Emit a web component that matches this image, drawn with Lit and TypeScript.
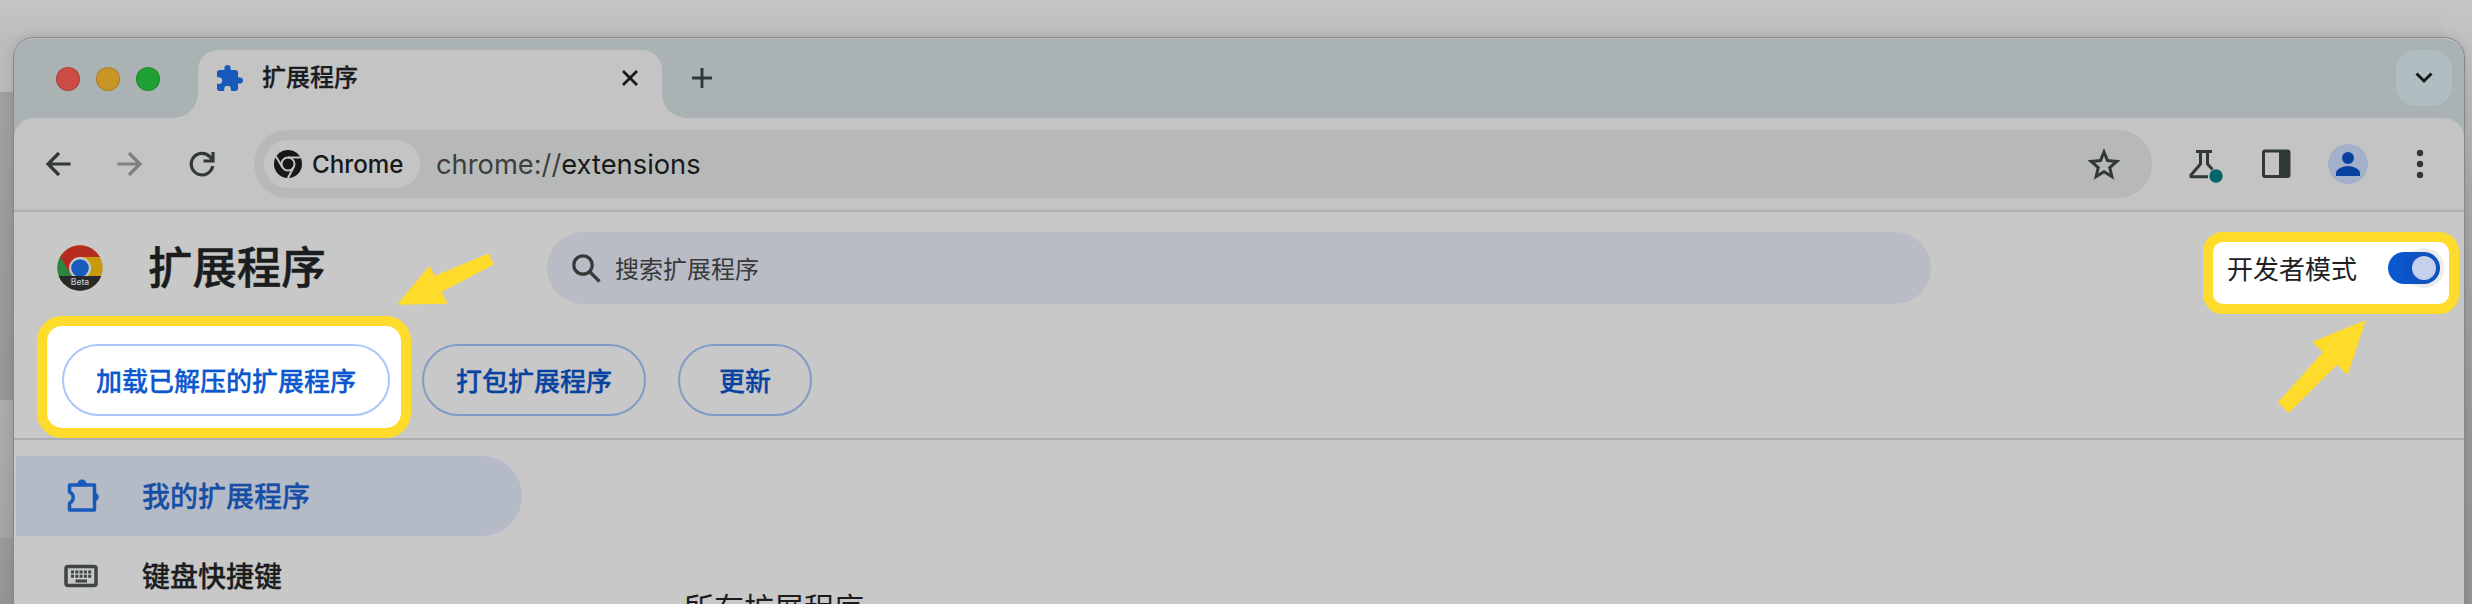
import { LitElement, html, css } from "lit";
import { customElement } from "lit/decorators.js";

@customElement("app-root")
export class AppRoot extends LitElement {
  static styles = css`
    * { box-sizing: border-box; }
    :host {
      box-sizing: border-box; display: block; width: 100%; height: 604px; overflow: hidden; position: relative;
      background:
        linear-gradient(180deg, #c5c5c5 0, #bebebe 60px, #a8a8a8 200px, #989898 420px, #949494 100%) right / 30px 100% no-repeat,
        linear-gradient(180deg, #c6c6c6 0, #bcbcbc 40px, #bababa 92px, #a0a0a0 92px, #969696 400px, #acacac 400px, #a4a4a4 538px, #9a9a9a 538px, #949494 100%) left / 30px 100% no-repeat,
        linear-gradient(180deg, #c6c6c6 0, #bcbcbc 40px);
      font-family: Inter, "Noto Sans CJK SC", sans-serif; color: #1b1c1e;
      padding: 38px 8px 0 14px;
    }
    svg { display: block; overflow: visible; flex: none; }
    .window {
      height: 566px; border-radius: 20px 20px 0 0; background: #abb2b4; position: relative;
      box-shadow: 0 0 0 1px #868788, 0 0 12px rgba(0,0,0,.16); display: flex; flex-direction: column;
    }
    .strip { height: 80px; flex: none; display: flex; align-items: center; padding: 12px 12px 12px 42px; box-shadow: inset 0 1px 0 #bcc2c3; border-radius: 20px 20px 0 0; }
    .lights { display: flex; gap: 16px; margin-top: 2px; }
    .light { width: 24px; height: 24px; border-radius: 50%; border: 1px solid rgba(0,0,0,.15); }
    .red { background: #cb4c44; } .amber { background: #ca9527; } .green { background: #1fa032; }
    .tab {
      align-self: flex-start; margin-left: 38px; width: 464px; height: 68px; background: #c4c4c4; border-radius: 20px 20px 0 0;
      position: relative; display: flex; align-items: center; padding: 0 24px 12px 19px; font-size: 24px; font-weight: 500;
    }
    .tab::before, .tab::after { content: ""; position: absolute; bottom: 0; width: 24px; height: 24px; }
    .tab::before { left: -24px; background: radial-gradient(circle at 0 0, transparent 23.5px, #c4c4c4 24px); }
    .tab::after { right: -24px; background: radial-gradient(circle at 100% 0, transparent 23.5px, #c4c4c4 24px); }
    .tabname { margin-left: 19px; flex: 1; line-height: 36px; -webkit-text-stroke: .3px; }
    .plus { margin-left: 30px; flex: 1; }
    .chev { width: 56px; height: 56px; border-radius: 20px; background: #b0bec2; display: grid; place-items: center; }
    .toolbar {
      height: 94px; flex: none; background: #c4c4c4; border-radius: 20px 20px 0 0; border-bottom: 2px solid #b0b0b0;
      display: flex; align-items: center; padding-left: 28px;
    }
    .nav { display: flex; gap: 40px; padding-right: 36px; }
    .omni {
      height: 68px; flex: 1; border-radius: 34px; background: #b7b9b8; display: flex; align-items: center; padding: 0 31px 0 10px;
    }
    .chip { width: 156px; height: 48px; border-radius: 24px; background: #c4c4c4; display: flex; align-items: center; padding-left: 10px; gap: 10px; font-size: 24.2px; font-weight: 500; color: #171919; }
    .url { margin-left: 16px; flex: 1; font-size: 27.3px; color: #171919; white-space: nowrap; }
    .url span { color: #3c3f3e; }
    .tools { margin-left: 32px; }
    .page { flex: 1; min-height: 0; overflow: hidden; background: #c8c8c8; display: flex; flex-direction: column; }
    .head { height: 112px; flex: none; display: flex; align-items: center; padding: 0 24px 0 43px; }
    h1 { margin: 0 0 0 45px; font-size: 44.4px; font-weight: 500; line-height: 60px; width: 356px; -webkit-text-stroke: .5px; }
    .logo { width: 46px; }
    .search { height: 72px; width: 1384px; margin-left: 43px; border-radius: 36px; background: #b9bcc5; display: flex; align-items: center; gap: 14px; padding-left: 25px; font-size: 24px; color: #37393a; }
    .search span { padding-bottom: 2px; }
    .dev { margin-left: auto; height: 40px; position: relative; z-index: 1; display: flex; align-items: center; gap: 31px; font-size: 26px; color: #202124; }
    .dev > span { padding-bottom: 1px; }
    .dev .spot { left: -24px; top: -16px; width: 256px; height: 82px; }
    .spot { position: absolute; z-index: -1; border: 10px solid #ffdb2b; border-radius: 20px; background: #fff; }
    .toggle { width: 52px; height: 32px; border-radius: 16px; background: #0b57d0; position: relative; }
    .toggle::before { content: ""; position: absolute; width: 40px; height: 40px; border-radius: 50%; left: 16px; top: -4px; background: rgba(31,31,31,.09); }
    .toggle::after { content: ""; position: absolute; width: 24px; height: 24px; border-radius: 50%; left: 24px; top: 4px; background: #c5d1ec; }
    .actions { height: 116px; flex: none; border-bottom: 2px solid #adadb1; display: flex; gap: 32px; padding: 20px 0 0 48px; position: relative; z-index: 0; }
    .btn { height: 72px; border: 2px solid #829bc6; border-radius: 36px; display: grid; place-items: center; padding-bottom: 2px; color: #0943a2; font-size: 26px; font-weight: 500; -webkit-text-stroke: .3px; position: relative; }
    .btn.load { width: 328px; border-color: #a8c7fa; color: #0b57d0; }
    .btn.pack { width: 224px; } .btn.upd { width: 134px; }
    .load .spot { left: -27px; top: -30px; width: 374px; height: 122px; border-radius: 25px; }
    .body { display: flex; }
    .side { width: 508px; padding: 16px 0 0 2px; }
    .item { height: 80px; display: flex; align-items: center; padding: 0 0 2px 46px; font-size: 28px; font-weight: 500; -webkit-text-stroke: .3px; }
    .item span { margin-left: 38px; }
    .on { background: #b4bac6; border-radius: 0 40px 40px 0; color: #174ea6; }
    .all { padding: 146px 0 0 162px; font-size: 30px; line-height: 44px; white-space: nowrap; }
    .arrows { position: absolute; left: 0; top: 0; }
  `;

  render() {
    return html`
      <div class="window">
        <div class="strip">
          <div class="lights"><i class="light red"></i><i class="light amber"></i><i class="light green"></i></div>
          <div class="tab">
            <svg width="26" height="26" viewBox="2 1 21 21"><path fill="#185abc" d="M20.500 11H19V7c0-1.100-.9-2-2-2h-4V3.500a2.500 2.500 0 0 0-5 0V5H4c-1.100 0-2 .9-2 2v3.800h1.500a2.700 2.700 0 0 1 0 5.400H2V20c0 1.100.9 2 2 2h3.800v-1.500a2.700 2.700 0 0 1 5.400 0V22H17c1.100 0 2-.9 2-2v-4h1.500a2.500 2.500 0 0 0 0-5z"/></svg>
            <span class="tabname">扩展程序</span>
            <svg width="16" height="16" viewBox="0 0 16 16" stroke="#171919" stroke-width="2.800"><path d="M1 1l14 14M15 1L1 15"/></svg>
          </div>
          <div class="plus"><svg width="20" height="20" viewBox="0 0 20 20" stroke="#303838" stroke-width="2.900"><path d="M10 0v20M0 10h20"/></svg></div>
          <div class="chev"><svg width="18" height="12" viewBox="0 0 18 12" fill="none" stroke="#171919" stroke-width="3"><path d="M1.500 1.500l7.500 7.500L16.500 1.500"/></svg></div>
        </div>
        <div class="toolbar">
          <div class="nav">
            <svg width="32" height="32" viewBox="0 0 32 32" fill="none" stroke="#303838" stroke-width="3.200"><path d="M28.500 16H6M17 5L6 16l11 11"/></svg>
            <svg width="32" height="32" viewBox="0 0 32 32" fill="none" stroke="#808080" stroke-width="3.200"><path d="M3.500 16H26M15 5l11 11-11 11"/></svg>
            <svg width="32" height="32" viewBox="0 0 32 32" fill="none" stroke="#303838" stroke-width="3.200"><path d="M26.700 18A10.800 10.800 0 1 1 24 8.800l2.500 2.700M27 4v9H17.500"/></svg>
          </div>
          <div class="omni">
            <div class="chip">
              <svg width="28" height="28" viewBox="0 0 28 28"><circle cx="14" cy="14" r="14" fill="#171919"/><g fill="none" stroke="#c4c4c4" stroke-width="2"><circle cx="14" cy="14" r="6.500"/><path d="M14 7.500h12.500M8.400 17.300L2 6.500M19.600 17.300L14 28"/></g></svg>
              Chrome
            </div>
            <div class="url"><span>chrome://</span>extensions</div>
            <svg width="34" height="32" viewBox="0 0 34 32" fill="none" stroke="#303838" stroke-width="3"><path d="M17 4l3.500 8.600 9.300.8-7 6.100 2.100 9.100L17 23.800l-7.900 4.800 2.100-9.100-7-6.100 9.300-.8z"/></svg>
          </div>
          <div class="tools">
            <svg width="280" height="40" viewBox="2184 144 280 40">
              <g fill="none" stroke="#303838" stroke-width="3"><path stroke-linejoin="round" d="M2196 151.500h16M2200.500 151v13l-9.500 11v1.700h17M2207.500 151v13l5 5.500"/><rect x="2263.500" y="151" width="25.500" height="25.500" rx="1.500"/></g>
              <path d="M2279 150h10v27h-10z" fill="#303838"/><circle cx="2216" cy="176" r="6.700" fill="#00666c"/>
              <circle cx="2348" cy="164" r="20" fill="#a3b0cb"/><circle cx="2348" cy="158" r="6" fill="#0842a0"/><path fill="#0842a0" d="M2336 176v-3c0-4 7-7 12-7s12 3 12 7v3z"/>
              <g fill="#303838"><circle cx="2420" cy="153" r="3.200"/><circle cx="2420" cy="164" r="3.200"/><circle cx="2420" cy="175" r="3.200"/></g>
            </svg>
          </div>
        </div>
        <div class="page">
          <div class="head">
            <svg class="logo" width="46" height="46" viewBox="0 0 46 46">
              <defs><clipPath id="disc"><circle cx="23" cy="23" r="22.700"/></clipPath></defs>
              <g clip-path="url(#disc)"><path fill="#c79a0c" d="M0 0h46v46H0z"/><path fill="#2a8442" d="M0 0l23 40H0z"/><path fill="#b52b22" d="M3 11.500L13.500 29 23 12h23V0H0z"/><circle cx="23" cy="23" r="11" fill="#c8c8c8"/><circle cx="23" cy="23" r="8.800" fill="#175bbd"/><path fill="#28292b" d="M0 31h46v15H0z"/></g>
              <text x="23" y="40" text-anchor="middle" font-size="8.500" font-weight="500" fill="#c8c8c8">Beta</text>
            </svg>
            <h1>扩展程序</h1>
            <div class="search"><svg width="29" height="29" viewBox="0 0 29 29" fill="none" stroke="#37393a" stroke-width="3.200"><circle cx="11" cy="11" r="9.200"/><path d="M17.500 17.500l10 10"/></svg><span>搜索扩展程序</span></div>
            <div class="dev"><div class="spot"></div><span>开发者模式</span><div class="toggle"></div></div>
          </div>
          <div class="actions">
            <div class="btn load"><div class="spot"></div>加载已解压的扩展程序</div>
            <div class="btn pack">打包扩展程序</div>
            <div class="btn upd">更新</div>
          </div>
          <div class="body">
            <div class="side">
              <div class="item on"><svg width="42" height="40" viewBox="0 0 42 40"><path fill="none" stroke="#185abc" stroke-width="3.500" stroke-linejoin="round" d="M7.500 10h25v25h-25v-7c5-2 5-9 0-11z"/><path fill="#185abc" d="M15.500 9a4.500 4.500 0 0 1 9 0zM33 17.500c5 1 5 8 0 9z"/></svg><span>我的扩展程序</span></div>
              <div class="item"><svg width="42" height="40" viewBox="0 0 42 40"><rect x="4" y="11.500" width="30" height="19" rx="2" fill="none" stroke="#3f4446" stroke-width="3.500"/><g stroke="#3f4446" stroke-width="3" fill="none"><path stroke-dasharray="3 1.300" d="M9 17h20.500M9 21.200h20.500"/><path d="M13.500 26h11.500"/></g></svg><span>键盘快捷键</span></div>
            </div>
            <div class="all">所有扩展程序</div>
          </div>
        </div>
      </div>
      <svg class="arrows" width="2472" height="604" viewBox="0 0 2472 604" fill="#ffdb2b" stroke="#ffdb2b" stroke-width="1.500" stroke-linejoin="round">
        <path d="M398.700 304l30.600-37 5.100 10 53.600-22.500 4.800 9.500-52 27.500 5.400 11.500z"/>
        <path d="M2364.500 321.500l-51 20.800 10.500 9.700-45 50.300 9.700 9.700 48-48 10.600 9.700z"/>
      </svg>
    `;
  }
}
